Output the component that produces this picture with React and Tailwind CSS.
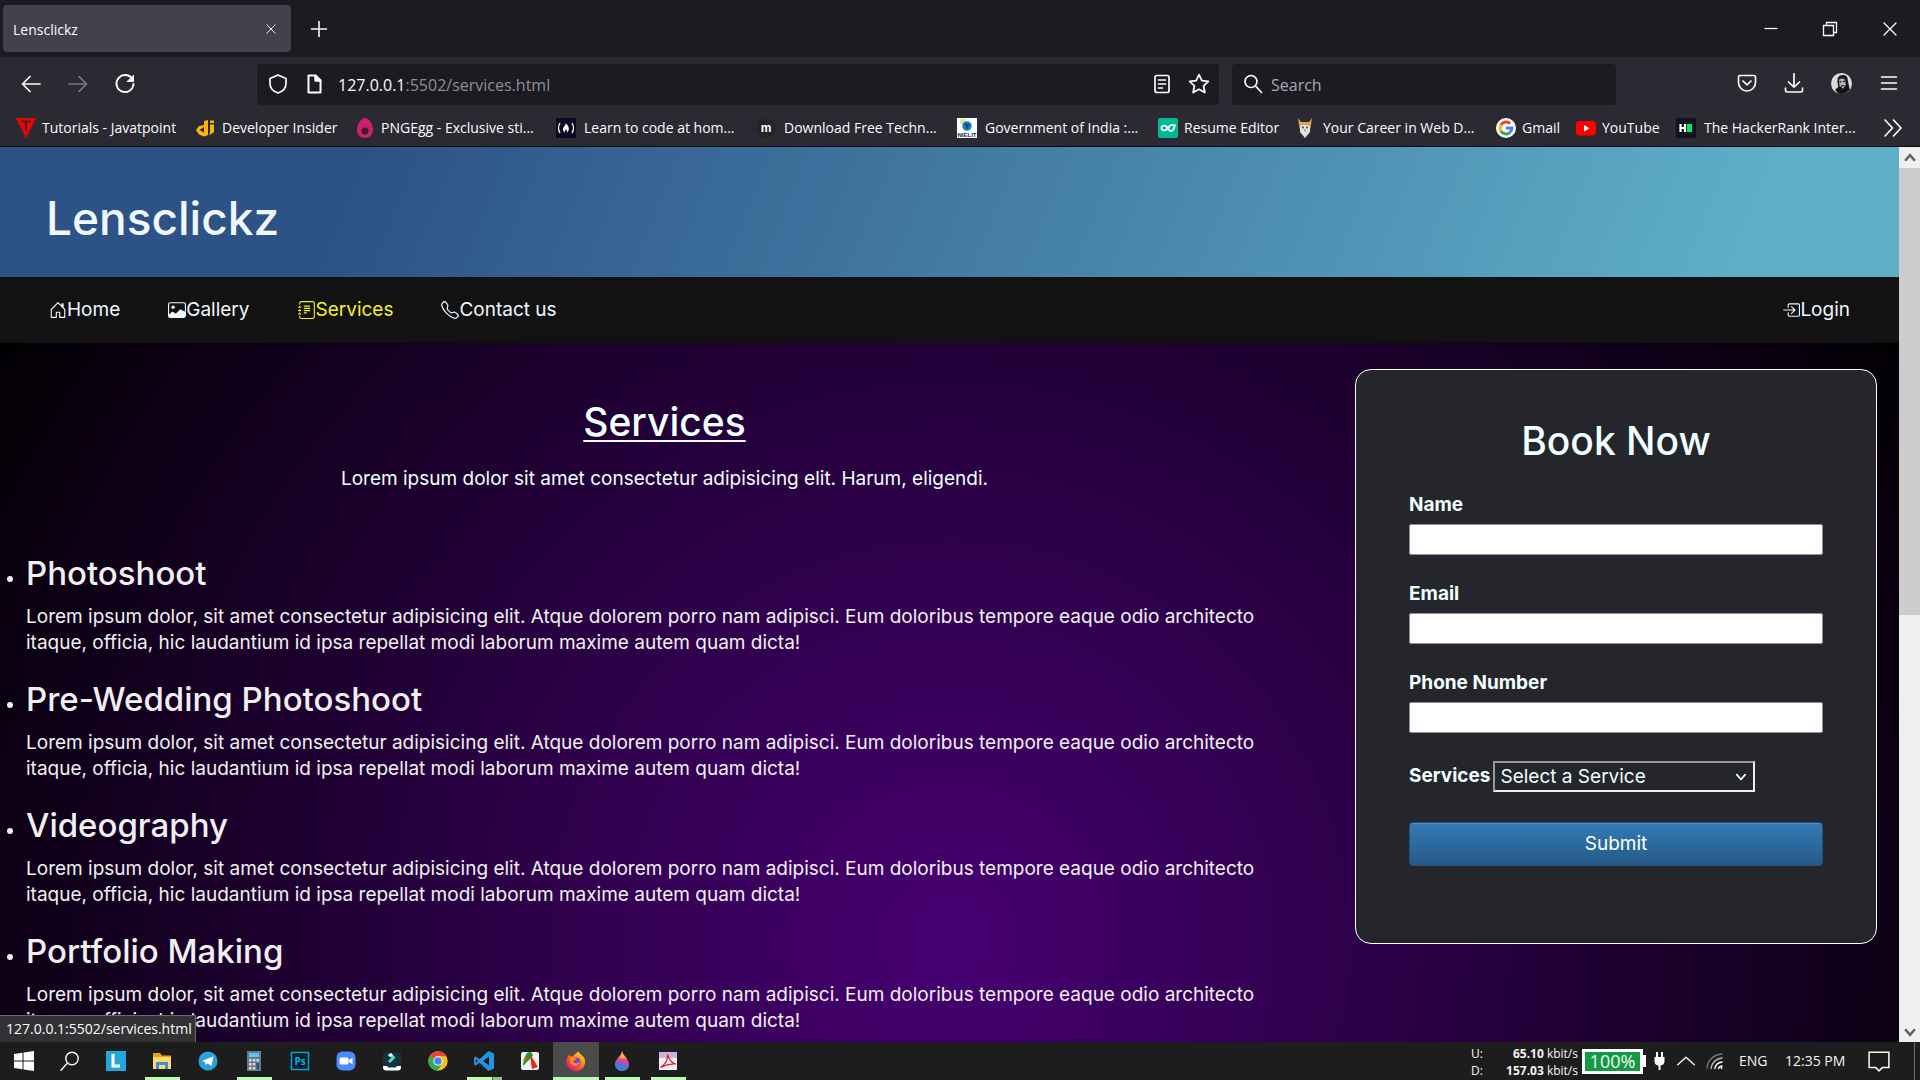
import React from "react";
import { BsHouseDoor, BsImage, BsJournalText, BsTelephone, BsBoxArrowInRight } from "react-icons/bs";

/* ---------- shared icon helpers ---------- */
function Line({ size = 20, width = 1.6, children, className = "" }) {
  return (
    <svg width={size} height={size} viewBox="0 0 20 20" fill="none" stroke="currentColor" strokeWidth={width} strokeLinecap="round" strokeLinejoin="round" className={`shrink-0 ${className}`} aria-hidden="true">
      {children}
    </svg>
  );
}

function Art({ size = 20, children, box = "0 0 20 20" }) {
  return (
    <svg width={size} height={size} viewBox={box} className="shrink-0" aria-hidden="true">
      {children}
    </svg>
  );
}

/* ---------- bookmark favicons ---------- */
const JavatpointIcon = () => (
  <Art>
    <path d="M0 0h20L10 20z" fill="#f80000" />
    <path d="M5 3.5h10M10 3.5V13" stroke="#2b2a33" strokeWidth="2" fill="none" />
  </Art>
);
const DjIcon = () => (
  <Art>
    <path d="M8 3l4-1v15l-4 1.500-5-2L0 12l3-4 5-1zM3.500 12L8 14.500V9z" fill="#f9b410" fillRule="evenodd" />
    <path d="M14 6.500h4V14l-5 3.500 1-3zM14 2.500h4V5h-4z" fill="#f9b410" />
  </Art>
);
const EggIcon = () => (
  <Art>
    <path d="M10 0c4.500 0 8 7 8 12s-3.500 8-8 8-8-3-8-8S5.500 0 10 0z" fill="#cc1f6f" />
    <circle cx="10" cy="13" r="3.500" fill="#3b1a2c" />
  </Art>
);
const CampIcon = () => (
  <Art>
    <path d="M0 0h20v20H0z" fill="#0a0a23" />
    <path d="M4 5Q1 10 4 15M16 5q3 5 0 10" stroke="#fff" strokeWidth="1.300" fill="none" />
    <path d="M9.500 5c3 2.500 4 5 3 7.500-.5 1-1 1.500-1.500 2 0-2-.5-3-1-3.500-.5 1.500-1.500 2-1 3.500-3-1.500-2-5-.5-6.500C9.500 7 9.800 6 9.500 5z" fill="#fff" />
  </Art>
);
const MIcon = () => (
  <Art>
    <circle cx="10" cy="10" r="9.500" fill="#242424" />
    <text x="10" y="13.500" textAnchor="middle" fontSize="12" fontWeight="700" fill="#fff" fontFamily="Liberation Sans, sans-serif">m</text>
  </Art>
);
const NielitIcon = () => (
  <Art>
    <path d="M0 0h20v20H0z" fill="#fff" />
    <circle cx="6" cy="3.500" r="3" fill="#dfe89a" />
    <circle cx="10" cy="8" r="4.800" fill="#1a86c7" />
    <path d="M7 5l6 1-3 6z" fill="#0c4f8f" />
    <text x="10" y="19.300" textAnchor="middle" fontSize="6" fontWeight="700" fill="#12215c" fontFamily="Liberation Sans, sans-serif">NIELIT</text>
  </Art>
);
const ResumeIcon = () => (
  <Art>
    <rect width="20" height="20" rx="2" fill="#00b893" />
    <path d="M10 10C8 7 3.500 6.500 3.500 10s4.500 3 6.500 0 4-4 6-2.500M10 10c1.500 3 3 4 4.500 2.500S16.500 9 17 7" stroke="#fff" strokeWidth="1.700" fill="none" strokeLinecap="round" />
  </Art>
);
const CareerIcon = () => (
  <Art>
    <path d="M3 0l3 4h8l3-4-1 7-1 5H5L4 7z" fill="#e0a458" />
    <path d="M5 8q5-2 10 0v6l-5 6-5-6z" fill="#e6e3df" />
    <circle cx="8" cy="9.500" r=".9" fill="#333" />
    <circle cx="12" cy="9.500" r=".9" fill="#333" />
    <path d="M10 11v2.500" stroke="#b58a5a" strokeWidth="1.200" />
  </Art>
);
const GoogleIcon = () => (
  <Art>
    <circle cx="10" cy="10" r="10" fill="#fff" />
    <g fill="none" strokeWidth="3">
      <path d="M14.200 5.800A5.900 5.900 0 0 0 4.900 7" stroke="#ea4335" />
      <path d="M4.900 7a5.900 5.900 0 0 0 0 6" stroke="#fbbc05" />
      <path d="M4.900 13a5.900 5.900 0 0 0 8.700 1.700" stroke="#34a853" />
      <path d="M13.600 14.700A5.900 5.900 0 0 0 15.900 10H10" stroke="#4285f4" />
    </g>
  </Art>
);
const YoutubeIcon = () => (
  <Art>
    <rect y="3" width="20" height="14.500" rx="3.500" fill="#f00" />
    <path d="M8 7l5.500 3.200L8 13.500z" fill="#fff" />
  </Art>
);
const HackerIcon = () => (
  <Art>
    <path d="M0 0h20v20H0z" fill="#0e141e" />
    <path d="M4.500 6v8M9 6v8M4.500 10H9" stroke="#fff" strokeWidth="2.200" />
    <path d="M11 6h5v8h-5z" fill="#00ea64" />
  </Art>
);

const bookmarks = [
  { label: "Tutorials - Javatpoint", Icon: JavatpointIcon, w: "w-[180px]" },
  { label: "Developer Insider", Icon: DjIcon, w: "w-[159px]" },
  { label: "PNGEgg - Exclusive sti...", Icon: EggIcon, w: "w-[201px]" },
  { label: "Learn to code at hom...", Icon: CampIcon, w: "w-[200px]", wide: true },
  { label: "Download Free Techn...", Icon: MIcon, w: "w-[201px]", wide: true },
  { label: "Government of India :...", Icon: NielitIcon, w: "w-[201px]", wide: true },
  { label: "Resume Editor", Icon: ResumeIcon, w: "w-[137px]" },
  { label: "Your Career in Web D...", Icon: CareerIcon, w: "w-[201px]", wide: true },
  { label: "Gmail", Icon: GoogleIcon, w: "w-[80px]" },
  { label: "YouTube", Icon: YoutubeIcon, w: "w-[100px]" },
  { label: "The HackerRank Inter...", Icon: HackerIcon, w: "w-[190px]", wide: true },
];

/* ---------- browser chrome ---------- */
function TabStrip() {
  return (
    <div className="flex h-[57px] shrink-0 items-center bg-[#1c1b22] pl-[3px]">
      <div className="flex h-[47px] w-72 items-center justify-between rounded bg-[#42414d] px-2.5 text-sm shadow">
        <span className="pt-0.5">Lensclickz</span>
        <button type="button" aria-label="Close tab" className="flex size-5 items-center justify-center">
          <Line size={14} width={1.3}><path d="M4 4l12 12M16 4L4 16" /></Line>
        </button>
      </div>
      <button type="button" aria-label="New tab" className="ml-[18px] flex size-5 items-center justify-center">
        <Line size={20} width={1.6}><path d="M10 2.500v15M2.500 10h15" /></Line>
      </button>
      <div className="ml-auto flex items-center">
        <button type="button" aria-label="Minimize" className="flex w-[59px] justify-center">
          <Line size={20} width={1.2}><path d="M3.500 9.500h13" strokeLinecap="butt" /></Line>
        </button>
        <button type="button" aria-label="Restore" className="flex w-[60px] justify-center">
          <Line size={20} width={1.3}><path d="M3.500 6.500h10v10h-10zM6.500 6.500v-3h10v10h-3" strokeLinejoin="miter" /></Line>
        </button>
        <button type="button" aria-label="Close window" className="flex w-[60px] justify-center">
          <Line size={20} width={1.3}><path d="M4 4l12 12M16 4L4 16" /></Line>
        </button>
      </div>
    </div>
  );
}

function Toolbar() {
  return (
    <div className="flex h-[54px] shrink-0 items-center bg-[#2b2a33] pl-[21px] pr-[21px]">
      <div className="flex w-[236px] items-center gap-[27px]">
        <button type="button" aria-label="Back"><Line width={1.7}><path d="M19 10H1.500M9 2.500L1.500 10 9 17.500" /></Line></button>
        <button type="button" aria-label="Forward" className="text-[#7a7981]"><Line width={1.7}><path d="M1 10h17.500M11 2.500l7.500 7.500-7.500 7.500" /></Line></button>
        <button type="button" aria-label="Reload">
          <Line width={2}>
            <path d="M17.500 5.500A8.500 8.500 0 1 0 18.500 10" />
            <path d="M18.500 1.500v6h-6z" fill="currentColor" strokeWidth="1" />
          </Line>
        </button>
      </div>
      <div className="flex h-[41px] flex-1 items-center rounded bg-[#1c1b22] pl-[11px] pr-[9px]">
        <Line width={1.7}><path d="M10 1l8 3.500v5c0 4.500-3.500 8-8 9.500-4.500-1.500-8-5-8-9.500v-5z" /></Line>
        <Line width={2} className="ml-4"><path d="M4.500 1.500h7l5 5v12h-12zM11.500 1.500v5h5" /><path d="M11.500 1.500v5h5z" fill="currentColor" /></Line>
        <div className="ml-3.5 flex-1 pt-0.5 text-base"><span className="text-[#fbfbfe]">127.0.0.1</span><span className="text-[#8f8e98]">:5502/services.html</span></div>
        <button type="button" aria-label="Reader view"><Line width={1.7}><rect x="3" y="1.500" width="14" height="17" rx="2" /><path d="M6.500 6h7M6.500 10h7M6.500 14h4" /></Line></button>
        <button type="button" aria-label="Bookmark this page" className="ml-4">
          <Line size={22} width={1.6}><path d="M10 1.500l2.600 5.400 5.900.8-4.300 4.100 1.100 5.900L10 14.800l-5.300 2.900 1.100-5.900L1.500 7.700l5.900-.8z" /></Line>
        </button>
      </div>
      <div className="ml-[13px] flex h-[41px] w-96 items-center rounded bg-[#1c1b22] pl-[11px]">
        <Line width={1.7}><circle cx="8" cy="7.500" r="6" /><path d="M12.500 12l6 6.500" /></Line>
        <input type="text" aria-label="Search" placeholder="Search" className="ml-2 min-w-0 flex-1 bg-transparent pt-0.5 text-base outline-none placeholder:text-[#a9a8b0]" />
      </div>
      <div className="ml-[121px] flex items-center gap-[27px] pb-0.5">
        <button type="button" aria-label="Pocket"><Line width={1.7}><path d="M3 2.500h14q1.500 0 1.500 1.500v5.500a8.500 8.500 0 0 1-17 0V4q0-1.500 1.500-1.500zM6 8l4 3.800L14 8" /></Line></button>
        <button type="button" aria-label="Downloads"><Line width={1.7}><path d="M10 .8V14M4.500 9L10 14.200 15.500 9M1.500 15v2.500q0 1.500 1.500 1.500h14q1.500 0 1.500-1.500V15" /></Line></button>
        <button type="button" aria-label="Account">
          <Art size={21}>
            <circle cx="10" cy="10" r="10" fill="#dcdcdc" />
            <path d="M6 8Q6 2 11 2t5 5l1 5 1 4q-4 4-8 4t-6-4l3-3z" fill="#161616" />
            <path d="M7.500 6.500q3-2.500 6 0l.5 5-2.500 3.500-3.500-3z" fill="#b3b3b3" />
            <path d="M8 8.500h2M11.500 8h2M9.500 12.500l3-.5" stroke="#222" strokeWidth="1.200" />
          </Art>
        </button>
        <button type="button" aria-label="Menu"><Line width={1.6}><path d="M2.500 4h15M2.500 10h15M2.500 16h15" /></Line></button>
      </div>
    </div>
  );
}

function BookmarksBar() {
  return (
    <nav aria-label="Bookmarks" className="flex h-9 shrink-0 items-center border-b border-[#0c0c0d] bg-[#2b2a33] pb-0.5 pl-4 pr-[17px] text-sm">
      {bookmarks.map(({ label, Icon, w, wide }) => (
        <a key={label} href="#bookmark" className={`flex shrink-0 items-center whitespace-nowrap ${wide ? "gap-2" : "gap-1.5"} ${w}`}>
          <Icon />
          <span>{label}</span>
        </a>
      ))}
      <button type="button" aria-label="More bookmarks" className="ml-auto"><Line width={1.7}><path d="M2 2l7.500 8L2 18M10.500 2l7.500 8-7.500 8" /></Line></button>
    </nav>
  );
}

/* ---------- web page ---------- */
const navItems = [
  { label: "Home", Icon: BsHouseDoor },
  { label: "Gallery", Icon: BsImage },
  { label: "Services", Icon: BsJournalText, active: true },
  { label: "Contact us", Icon: BsTelephone },
];

function NavLink({ label, Icon, active }) {
  return (
    <a href={`#${label}`} className={`flex items-center ${active ? "text-[#f5ef2c]" : "text-[#f0f8ff]"}`}>
      <Icon className="size-[18px]" />
      {label}
    </a>
  );
}

function SiteHeader() {
  return (
    <header>
      <div className="flex h-[130px] items-center bg-[linear-gradient(112deg,#2d5286_19%,#5eaec8_91%)] px-[46px] pt-3">
        <h1 className="text-[46px] font-medium text-[#f0f8ff]">Lensclickz</h1>
      </div>
      <nav aria-label="Site" className="flex h-[66px] items-center gap-12 bg-[#121212] px-[49px] text-[19px]">
        {navItems.map((item) => <NavLink key={item.label} {...item} />)}
        <div className="ml-auto"><NavLink label="Login" Icon={BsBoxArrowInRight} /></div>
      </nav>
    </header>
  );
}

const services = ["Photoshoot", "Pre-Wedding Photoshoot", "Videography", "Portfolio Making"];

function ServiceList() {
  return (
    <section className="mr-[26px] min-w-0 flex-1 text-[#f0ffff]">
      <div className="flex flex-col items-center pt-[53px]">
        <h2 className="text-[39px] leading-[52px] font-medium underline decoration-2 underline-offset-4">Services</h2>
        <p className="mt-[18px] text-[19px] leading-[26px]">Lorem ipsum dolor sit amet consectetur adipisicing elit. Harum, eligendi.</p>
      </div>
      <ul className="mt-[60px] list-disc pl-[26px] pr-4 text-[19px] text-[#f0f0f0]">
        {services.map((name) => (
          <li key={name} className="mb-[22px]">
            <h3 className="text-[33px] leading-[42px] font-medium">{name}</h3>
            <p className="mt-2.5 leading-[26px]">
              Lorem ipsum dolor, sit amet consectetur adipisicing elit. Atque dolorem porro nam adipisci. Eum doloribus tempore eaque odio architecto itaque, officia, hic laudantium id ipsa repellat modi laborum maxime autem quam dicta!
            </p>
          </li>
        ))}
      </ul>
    </section>
  );
}

function Field({ id, label, type }) {
  return (
    <div className="mb-[25px] flex flex-col">
      <label htmlFor={id} className="mb-[5px] leading-7 font-bold">{label}</label>
      <input id={id} type={type} className="h-[31px] rounded-xs border border-[#8f8f9d] bg-white px-1 text-black" />
    </div>
  );
}

function BookingForm() {
  return (
    <form className="mt-[26px] mr-[22px] h-[575px] w-[522px] shrink-0 rounded-2xl border border-white bg-[#25262b] px-[53px] pt-[45px] text-[19px] text-[#f0ffff]">
      <h2 className="mb-6 text-center text-[39px] leading-[52px] font-medium">Book Now</h2>
      <Field id="name" label="Name" type="text" />
      <Field id="email" label="Email" type="email" />
      <Field id="phone" label="Phone Number" type="tel" />
      <div className="mt-7 flex items-center gap-[3px]">
        <label htmlFor="service" className="font-bold">Services</label>
        <div className="relative">
          <select id="service" className="h-[31px] w-[262px] appearance-none border-2 border-t-[#9a9a9a] border-r-[#ececec] border-b-[#ececec] border-l-[#9a9a9a] bg-transparent pl-[5px] leading-none outline-none">
            <option>Select a Service</option>
          </select>
          <Line size={12} width={2.8} className="pointer-events-none absolute top-2.5 right-2"><path d="M3 6l7 8 7-8" /></Line>
        </div>
      </div>
      <button type="submit" className="mt-[30px] h-11 w-full rounded border border-[#245580] bg-linear-to-b from-[#337ab7] to-[#265a88] text-white shadow-[inset_0_1px_0_rgba(255,255,255,0.15)]">Submit</button>
    </form>
  );
}

function Scrollbar() {
  return (
    <div className="flex w-[21px] shrink-0 flex-col bg-[#f0f0f0] text-[#606060]" aria-hidden="true">
      <div className="flex h-[21px] items-center justify-center"><Line size={14} width={3.5}><path d="M3 14l7-8 7 8" strokeLinecap="butt" strokeLinejoin="miter" /></Line></div>
      <div className="flex-1"><div className="h-[52.4%] bg-[#cdcdcd]" /></div>
      <div className="flex h-[21px] items-center justify-center"><Line size={14} width={3.5}><path d="M3 6l7 8 7-8" strokeLinecap="butt" strokeLinejoin="miter" /></Line></div>
    </div>
  );
}

/* ---------- taskbar ---------- */
const WindowsIcon = () => <Art size={20}><path d="M0 3l8.500-1.300v7.800H0zM9.500 1.500L20 0v9.500H9.500zM0 10.500h8.500v7.800L0 17zM9.500 10.500H20V20L9.500 18.500z" fill="#fff" /></Art>;
const SearchIcon = () => <Line size={20} width={1.4}><circle cx="12" cy="7.500" r="6.200" /><path d="M7.500 12L1 19.200" /></Line>;
const LIcon = () => <Art><path d="M0 0h20v20H0z" fill="#22a7d8" /><path d="M7 3v12h7" fill="none" stroke="#fff" strokeWidth="3" /></Art>;
const FolderIcon = () => (
  <Art><path d="M1 2h7l2 2.500h9V18H1z" fill="#e8a317" /><path d="M1 6h18v12H1z" fill="#ffd868" /><path d="M4 11h12v7h-3v-4H7v4H4z" fill="#3b8ede" /></Art>
);
const TelegramIcon = () => <Art><circle cx="10" cy="10" r="9.500" fill="#2ba0dc" /><path d="M4 10l11.500-4.800L13.500 15l-4-2.700L7.500 14l-.3-3z" fill="#fff" /></Art>;
const CalcIcon = () => (
  <Art><path d="M3 0h14v20H3z" fill="#6c7885" /><path d="M5 2h10v4H5z" fill="#4cc8f4" /><path d="M5 8h2.500v2.500H5zM8.800 8h2.500v2.500H8.800zM12.500 8H15v2.500h-2.500zM5 12h2.500v2.500H5zM8.800 12h2.500v2.500H8.800zM5 16h2.500v2.500H5zM8.800 16h2.500v2.500H8.800z" fill="#d5dce3" /><path d="M12.500 12H15v6.500h-2.500z" fill="#1a4f9c" /></Art>
);
const PsIcon = () => <Art><path d="M1.500 1.500h17v17h-17z" fill="#0a1a26" stroke="#00a8d6" strokeWidth="1.500" /><text x="10" y="14" textAnchor="middle" fontSize="10" fontWeight="700" fill="#00b4e6" fontFamily="Open Sans, sans-serif">Ps</text></Art>;
const ZoomIcon = () => <Art><rect x=".5" y=".5" width="19" height="19" rx="6" fill="#4a8cff" /><rect x="3.500" y="6.500" width="9" height="7" rx="1.500" fill="#fff" /><path d="M13 9l3.500-2.300v6.600L13 11z" fill="#fff" /></Art>;
const FilmoraIcon = () => <Art><rect x="1" y="1" width="18" height="18" rx="3" fill="#17323f" /><path d="M6 4l3-2 4.500 4.500L8 12l-2-2 3.500-3.500z" fill="#4fe0c1" /><path d="M6 4l3-2 2 2-3 2z" fill="#fff" /><path d="M1 15h4l1.500 1.500h7L15 15h4v1.500q0 3-3 3H4q-3 0-3-3z" fill="#fff" /></Art>;
const ChromeIcon = () => (
  <Art><circle cx="10" cy="10" r="9.700" fill="#fbc116" /><path d="M10 10L1.600 5.150A9.700 9.700 0 0 1 18.400 5.150H10z" fill="#ea4335" /><path d="M1.600 5.150A9.700 9.700 0 0 0 9.500 19.700L14.200 12.400 10 10z" fill="#34a853" /><circle cx="10" cy="10" r="4.700" fill="#fff" /><circle cx="10" cy="10" r="3.700" fill="#4285f4" /></Art>
);
const CodeIcon = () => <Art><path d="M14.500 0L20 2.500v15L14.500 20 5.500 11.700 1.800 14.500 0 13.500v-7l1.800-1 3.700 2.800zM15 5.500L9 10l6 4.500zM1.800 8v4l2-2z" fill="#2196e0" fillRule="evenodd" /></Art>;
const FastStoneIcon = () => <Art><rect x="1" y="1" width="18" height="18" rx="2" fill="#f2f2f0" /><path d="M7 2c4-3 7 1 5 4L3 15Q3 8 7 2z" fill="#1d9a2c" /><path d="M10 3l8 13-6 2-1-6z" fill="#e02b1d" /><path d="M3 9l3-4 1 5z" fill="#e5561d" /></Art>;
const FirefoxIcon = () => (
  <Art>
    <defs>
      <linearGradient id="fx" x1="1" y1="0" x2=".2" y2="1"><stop offset="0" stopColor="#fff44f" /><stop offset=".4" stopColor="#ff980e" /><stop offset=".75" stopColor="#ff3647" /><stop offset="1" stopColor="#e31587" /></linearGradient>
    </defs>
    <path d="M12 0c1 3 5 4 6.500 7.500C21 14 16 20 10 20S-.5 15 .7 9C1.200 6 2.500 4.500 3 3.500c.3 1 .6 1.500 1 2C5 5 6 5 7 5.500 8.500 2.500 11 3 12 0z" fill="url(#fx)" />
    <circle cx="10" cy="11" r="4.600" fill="#7542e5" />
    <path d="M4 7c3-2 6 0 7 1-2 0-2 2-4 2 1 3 5 3 7 0 0 4-4 6-7 4.500S3.500 10 4 7z" fill="#ff8a16" />
  </Art>
);
const DropIcon = () => (
  <Art>
    <path d="M10 0c1 5 7 8 7 13.500a7 6.500 0 0 1-14 0C3 8 9 5 10 0z" fill="#d8479a" />
    <path d="M10 0c.6 3 3 5 5 8L7 7c1.500-2 2.600-4 3-7z" fill="#f7b02c" />
    <path d="M3.200 12c4-3 8 3 13.600 0 1 4-2 8-6.800 8s-7.500-4-6.800-8z" fill="#3f7fd9" />
    <path d="M4 10c3-2 8 4 13 2l-.5 3c-5 1-8-4-13.300-2z" fill="#9a56c9" />
  </Art>
);
const PdfIcon = () => <Art><path d="M1 1h18v18H1z" fill="#f3eef6" /><path d="M1 1h18v6H1z" fill="#cfaee0" /><path d="M2.500 16.500C8 13 10 8 9.500 3.500c2 6 4 9 8.500 9.500-5-.5-10 .5-15.500 3.500z" fill="none" stroke="#e02030" strokeWidth="1.200" /></Art>;

const apps = [
  { name: "Start", Icon: WindowsIcon },
  { name: "Search Windows", Icon: SearchIcon },
  { name: "Launcher", Icon: LIcon },
  { name: "File Explorer", Icon: FolderIcon, open: true },
  { name: "Telegram", Icon: TelegramIcon },
  { name: "Calculator", Icon: CalcIcon, open: true },
  { name: "Photoshop", Icon: PsIcon },
  { name: "Zoom", Icon: ZoomIcon },
  { name: "Filmora", Icon: FilmoraIcon },
  { name: "Chrome", Icon: ChromeIcon },
  { name: "Code", Icon: CodeIcon, open: true, stacked: true },
  { name: "Capture", Icon: FastStoneIcon },
  { name: "Firefox", Icon: FirefoxIcon, open: true, active: true },
  { name: "Paint", Icon: DropIcon, open: true },
  { name: "PDF", Icon: PdfIcon, open: true },
];

function Taskbar() {
  return (
    <footer className="flex h-[38px] shrink-0 items-stretch bg-[#1d1d1d] pl-px">
      {apps.map(({ name, Icon, open, active, stacked }) => (
        <button key={name} type="button" aria-label={name} className={`flex w-[46px] shrink-0 flex-col items-center ${active ? "bg-[#4b4b4b]" : ""}`}>
          <span className="flex flex-1 items-center pt-0.5"><Icon /></span>
          <span className={`flex h-[3px] justify-end ${active ? "w-full" : "w-[35px]"} ${open ? "bg-[#bdfcb1]" : ""}`}>
            {stacked && <span className="w-2.5 border-l border-[#4f6b4b] bg-[#90c588]" />}
          </span>
        </button>
      ))}
      <div className="ml-auto flex items-center pr-[5px] text-[#f5f5f5]">
        <div className="grid w-[107px] grid-cols-[auto_1fr] pt-0.5 text-xs leading-[17px]">
          <span>U:</span><span className="text-right"><b>65.10</b> kbit/s</span>
          <span>D:</span><span className="text-right"><b>157.03</b> kbit/s</span>
        </div>
        <div className="mr-[3px] ml-1 flex items-center">
          <div className="flex h-[25px] w-[61px] items-center justify-center border-3 border-white bg-[#149a44] text-lg leading-none">100%</div>
          <div className="h-3 w-[3px] bg-white" />
        </div>
        <Art size={20}><path d="M7 1h2v5h3V1h2v5h1.500v4q0 4-4 4.500V19h-2v-4.500q-4-.5-4-4.500V6H7z" fill="#fff" /></Art>
        <Line size={22} width={1.3} className="ml-1.5"><path d="M2.500 13.500L10 6.500l7.500 7" /></Line>
        <Line size={20} width={1.4} className="ml-2 text-[#b5b5b5]">
          <path d="M2 17C2.500 9 9 3.500 17 3" stroke="#777" /><path d="M6 17.500C6.500 12 11 7.500 17 7" /><path d="M10 17.500c.5-3.500 3-6 7-6.500M13.500 17.500q.5-2 3.500-2.500" stroke="#fff" /><circle cx="16.500" cy="17" r="1" fill="#fff" stroke="none" />
        </Line>
        <span className="ml-3.5 w-[30px] text-sm">ENG</span>
        <time className="ml-4 w-16 text-sm whitespace-nowrap">12:35 PM</time>
        <button type="button" aria-label="Notifications" className="ml-[19px]">
          <Line size={22} width={1.4}><path d="M1 2h18v14h-6l-3 3-3-3H1z" strokeLinejoin="miter" /></Line>
        </button>
        <div className="ml-6 h-[38px] w-px bg-[#6a6a6a]" />
      </div>
    </footer>
  );
}

export default function App() {
  return (
    <div className="flex h-screen flex-col overflow-hidden font-['Open_Sans',sans-serif] text-[#fbfbfe]">
      <TabStrip />
      <Toolbar />
      <BookmarksBar />
      <div className="relative flex min-h-0 flex-1">
        <main className="min-w-0 flex-1 overflow-hidden font-['Inter',sans-serif]">
          <SiteHeader />
          <div className="flex min-h-full items-start bg-black bg-[radial-gradient(circle_at_50%_598px,#470072,#000_1160px)]">
            <ServiceList />
            <BookingForm />
          </div>
        </main>
        <Scrollbar />
        <div className="absolute bottom-0 left-0 flex h-[27px] w-[196px] items-center border-t border-r border-[#6b6b6b] bg-[#323234] pl-1.5 text-sm">127.0.0.1:5502/services.html</div>
      </div>
      <Taskbar />
    </div>
  );
}
